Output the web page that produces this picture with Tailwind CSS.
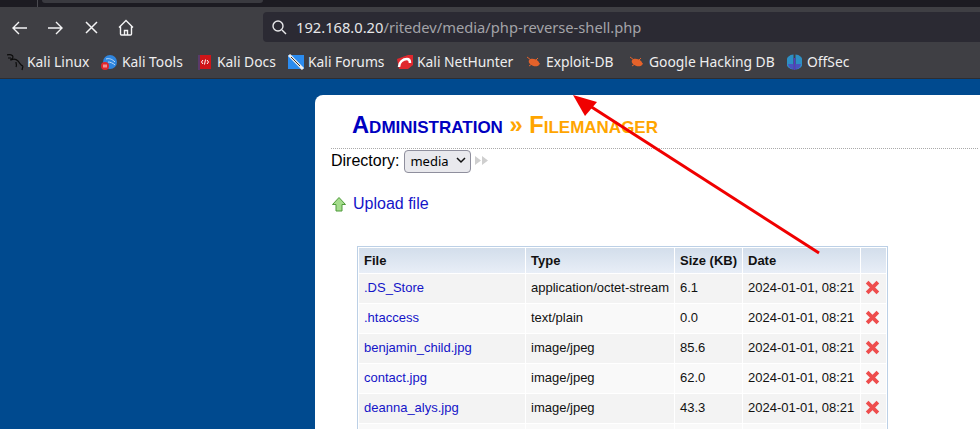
<!DOCTYPE html>
<html lang="en">

<head>
    <meta charset="UTF-8">
    <meta name="viewport" content="width=device-width, initial-scale=1.0">
    <title>Filemanager</title>
    <script src="https://cdn.jsdelivr.net/npm/@tailwindcss/browser@4"></script>
</head>

<body class="relative w-[980px] h-[429px] overflow-hidden bg-[#004a8f] font-['Liberation_Sans',sans-serif]">

    <!-- tab strip -->
    <div class="h-[7px] bg-[#1c1b22] flex">
        <div class="ml-[37px] w-px h-[7px] bg-[#4a4a50]"></div>
        <div class="ml-[4px] w-[221px] h-[3px] bg-[#3a3a40] rounded-b"></div>
    </div>

    <!-- nav toolbar -->
    <div class="h-[35px] bg-[#3f3f44] flex items-start pt-[5px]">
        <div class="w-[263px] h-[30px] pt-[1px] flex items-center pl-[12px] gap-[16px] text-[#f4f4f5]">
            <svg class="w-[15px] h-[16px]" viewBox="0 0 15 16" fill="none" stroke="currentColor" stroke-width="1.4"><path d="M1 8h14M7 2L1 8l6 6"/></svg>
            <svg class="ml-[5px] w-[15px] h-[16px]" viewBox="0 0 15 16" fill="none" stroke="currentColor" stroke-width="1.4"><path d="M0 8h14M8 2l6 6-6 6"/></svg>
            <svg class="ml-[5px] w-[15px] h-[15px]" viewBox="0 0 15 15" fill="none" stroke="currentColor" stroke-width="1.5"><path d="M2 2l11 11M13 2L2 13"/></svg>
            <svg class="ml-[3px] w-[16px] h-[18px]" viewBox="0 0 16 18" fill="none" stroke="currentColor" stroke-width="1.4"><path d="M1 8.500l7-7 7 7M2.500 7.500V15a1 1 0 001 1h9a1 1 0 001-1V7.500M6.500 16v-4.500h3V16"/></svg>
        </div>
        <div class="flex-1 h-[30px] bg-[#2b2a33] rounded-l-[4px] flex items-center pl-[8px] text-[14.7px] font-['Noto_Sans',sans-serif] text-[#a3a3a8]">
            <svg class="w-[16px] h-[16px] text-[#e8e8ea]" viewBox="0 0 16 16" fill="none" stroke="currentColor" stroke-width="1.4"><circle cx="7" cy="7" r="5"/><path d="M11 11l4 4"/></svg>
            <span class="ml-[9px]"><span class="text-[#e6e6e8]">192.168.0.20</span>/ritedev/media/php-reverse-shell.php</span>
        </div>
    </div>

    <!-- bookmarks -->
    <div class="h-[37px] pt-[5px] bg-[#3f3f44] border-b border-[#2d2d31] flex items-center pl-[7px] text-[13.85px] font-['Noto_Sans',sans-serif] text-[#eeeeef]">
        <div class="flex items-center w-[94px]">
            <svg class="w-[17px] h-[17px]" viewBox="0 0 17 17" fill="none" stroke="#0d0d0d" stroke-width="1.2"><path d="M0 1c3-1 6 0 6 2S3 5 4 6c2-1 5-1 7 1 2 2 2 4 5 5M16 12l-1 4M9 8c0 2 1 3 0 5M1 4l3 0"/></svg>
            <span class="ml-[3px]">Kali Linux</span>
        </div>
        <div class="flex items-center w-[96px]">
            <svg class="w-[16px] h-[17px]" viewBox="0 0 16 17"><circle cx="9" cy="8" r="7" fill="#2f86e0"/><path d="M5 5c3-1 6 0 9 3M7 8c2 0 5 1 7 3" fill="none" stroke="#bcdcf8"/><circle cx="4" cy="12" r="4" fill="#e0252b"/><path d="M3 10.500v3M5 10.500v3" stroke="#fff"/></svg>
            <span class="ml-[5px]">Kali Tools</span>
        </div>
        <div class="flex items-center w-[91px]">
            <svg class="w-[15px] h-[17px]" viewBox="0 0 15 17"><rect x="2" y="1" width="12" height="14" fill="#cf1518"/><rect x="1" y="1" width="2" height="15" fill="#5a3a6a"/><path d="M6 6L4.500 8 6 10M10 6l1.500 2L10 10M8.500 5.500l-1 5" fill="none" stroke="#fff"/></svg>
            <span class="ml-[5px]">Kali Docs</span>
        </div>
        <div class="flex items-center w-[109px]">
            <svg class="w-[16px] h-[16px]" viewBox="0 0 16 16"><rect y="1" width="16" height="14" fill="#2b8cf0"/><path d="M1 1l14 14" stroke="#eee" stroke-width="3"/><path d="M3 3l9 9" stroke="#333"/></svg>
            <span class="ml-[4px]">Kali Forums</span>
        </div>
        <div class="flex items-center w-[129px]">
            <svg class="w-[16px] h-[16px]" viewBox="0 0 16 16"><path d="M0 5l11-4h5v10l-5 4H2z" fill="#e0282e"/><path d="M2 13c0-5 4-8 8-8 2 0 3 2 3 4" fill="none" stroke="#fff" stroke-width="2.500"/></svg>
            <span class="ml-[4px]">Kali NetHunter</span>
        </div>
        <div class="flex items-center w-[103px]">
            <svg class="w-[15px] h-[12px]" viewBox="0 0 15 12"><ellipse cx="8" cy="6.500" rx="5.500" ry="3.500" fill="#e5622a" transform="rotate(20 8 6.500)"/><path d="M1 1l4 3M3 10l3-2M12 2l-2 2M14 8l-3-1" stroke="#e5622a"/></svg>
            <span class="ml-[5px]">Exploit-DB</span>
        </div>
        <div class="flex items-center w-[158px]">
            <svg class="w-[15px] h-[12px]" viewBox="0 0 15 12"><ellipse cx="8" cy="6.500" rx="5.500" ry="3.500" fill="#e5622a" transform="rotate(20 8 6.500)"/><path d="M1 1l4 3M3 10l3-2M12 2l-2 2M14 8l-3-1" stroke="#e5622a"/></svg>
            <span class="ml-[5px]">Google Hacking DB</span>
        </div>
        <div class="flex items-center">
            <svg class="w-[15px] h-[16px]" viewBox="0 0 15 16"><path d="M6.500 0.500A7.500 7.500 0 006.500 15.500z" fill="#2d8fc4"/><path d="M8.500 0.500A7.500 7.500 0 018.500 15.500z" fill="#2d8fc4"/><path d="M7.500 4v12" stroke="#5b35c0" stroke-width="1.500"/><path d="M1 10a7 7 0 005.500 5.500V10zM14 10a7 7 0 01-5.500 5.500V10z" fill="#4a52c0"/></svg>
            <span class="ml-[5px]">OffSec</span>
        </div>
    </div>

    <!-- page -->
    <div class="h-[350px] pl-[315px] pt-[16px] overflow-hidden">
        <div class="bg-white rounded-tl-[8px] h-[334px] pl-[16px] pr-[2px] text-black overflow-hidden">
            <h1 class="pl-[21px] pt-[17px] h-[53px] text-[23.7px] leading-[26px] font-bold [font-variant:small-caps] text-[#0000c0]">
                Administration <span class="text-[#ffa500]">» Filemanager</span>
            </h1>
            <div class="border-t border-dotted border-[#aaaaaa] flex items-center h-[24px] text-[16px]">
                <span>Directory:</span>
                <div class="relative ml-[5px] w-[67px] h-[23px]">
                    <select class="w-[67px] h-[23px] bg-[#e9e9ed] border border-[#8f8f9d] rounded-[4px] text-[13px] font-['Noto_Sans',sans-serif] pl-[5px] appearance-none">
                        <option>media</option>
                    </select>
                    <svg class="absolute right-[5px] top-[8px] w-[10px] h-[7px] pointer-events-none" viewBox="0 0 10 7" fill="none" stroke="#111" stroke-width="1.5"><path d="M1 1l4 4 4-4"/></svg>
                </div>
                <svg class="ml-[4px] w-[13px] h-[9px]" viewBox="0 0 13 9" fill="#cfcfcf"><path d="M0 0l6 4.500L0 9zM7 0l6 4.500L7 9z"/></svg>
            </div>
            <div class="mt-[22px] flex items-center h-[20px] text-[16px]">
                <svg class="ml-[1px] w-[14px] h-[15px]" viewBox="0 0 14 15"><path d="M7 .5L13.500 7.500H10V14H4V7.500H.5z" fill="#a4dc8c" stroke="#4f9a3a"/></svg>
                <a href="#" class="ml-[7px] text-[#1414c8]">Upload file</a>
            </div>

            <table class="mt-[32px] ml-[26px] w-[531px] table-fixed border-separate border-spacing-[1px] border border-[#bcd0e6] text-[13px] leading-[15px] text-left text-[#111]">
                <colgroup>
                    <col class="w-[166px]"><col class="w-[148px]"><col class="w-[67px]"><col class="w-[117px]"><col>
                </colgroup>
                <thead>
                    <tr class="h-[25px] bg-gradient-to-b from-[#d3deeb] to-[#e8eef7] font-bold">
                        <th class="px-[5px]">File</th><th class="px-[5px]">Type</th><th class="pl-[5px] whitespace-nowrap">Size (KB)</th><th class="px-[5px]">Date</th><th></th>
                    </tr>
                </thead>
                <tbody>
                    <tr class="h-[29px] bg-[#f3f3f3]">
                        <td class="px-[5px] pb-[3px]"><a href="#" class="text-[#1414c8]">.DS_Store</a></td><td class="px-[5px] pb-[3px]">application/octet-stream</td><td class="px-[5px] pb-[3px]">6.1</td><td class="px-[5px] pb-[3px]">2024-01-01, 08:21</td>
                        <td class="px-[4px] pb-[2px]"><svg class="block w-[15px] h-[15px]" viewBox="0 0 14 14"><path d="M2 2l10 10M12 2L2 12" stroke="#ee4d4d" stroke-width="3.500"/></svg></td>
                    </tr>
                    <tr class="h-[29px] bg-[#f9f9f9]">
                        <td class="px-[5px] pb-[3px]"><a href="#" class="text-[#1414c8]">.htaccess</a></td><td class="px-[5px] pb-[3px]">text/plain</td><td class="px-[5px] pb-[3px]">0.0</td><td class="px-[5px] pb-[3px]">2024-01-01, 08:21</td>
                        <td class="px-[4px] pb-[2px]"><svg class="block w-[15px] h-[15px]" viewBox="0 0 14 14"><path d="M2 2l10 10M12 2L2 12" stroke="#ee4d4d" stroke-width="3.500"/></svg></td>
                    </tr>
                    <tr class="h-[29px] bg-[#f3f3f3]">
                        <td class="px-[5px] pb-[3px]"><a href="#" class="text-[#1414c8]">benjamin_child.jpg</a></td><td class="px-[5px] pb-[3px]">image/jpeg</td><td class="px-[5px] pb-[3px]">85.6</td><td class="px-[5px] pb-[3px]">2024-01-01, 08:21</td>
                        <td class="px-[4px] pb-[2px]"><svg class="block w-[15px] h-[15px]" viewBox="0 0 14 14"><path d="M2 2l10 10M12 2L2 12" stroke="#ee4d4d" stroke-width="3.500"/></svg></td>
                    </tr>
                    <tr class="h-[29px] bg-[#f9f9f9]">
                        <td class="px-[5px] pb-[3px]"><a href="#" class="text-[#1414c8]">contact.jpg</a></td><td class="px-[5px] pb-[3px]">image/jpeg</td><td class="px-[5px] pb-[3px]">62.0</td><td class="px-[5px] pb-[3px]">2024-01-01, 08:21</td>
                        <td class="px-[4px] pb-[2px]"><svg class="block w-[15px] h-[15px]" viewBox="0 0 14 14"><path d="M2 2l10 10M12 2L2 12" stroke="#ee4d4d" stroke-width="3.500"/></svg></td>
                    </tr>
                    <tr class="h-[29px] bg-[#f3f3f3]">
                        <td class="px-[5px] pb-[3px]"><a href="#" class="text-[#1414c8]">deanna_alys.jpg</a></td><td class="px-[5px] pb-[3px]">image/jpeg</td><td class="px-[5px] pb-[3px]">43.3</td><td class="px-[5px] pb-[3px]">2024-01-01, 08:21</td>
                        <td class="px-[4px] pb-[2px]"><svg class="block w-[15px] h-[15px]" viewBox="0 0 14 14"><path d="M2 2l10 10M12 2L2 12" stroke="#ee4d4d" stroke-width="3.500"/></svg></td>
                    </tr>
                    <tr class="h-[29px] bg-[#f9f9f9]"><td></td><td></td><td></td><td></td><td></td></tr>
                </tbody>
            </table>
        </div>
    </div>

    <!-- annotation arrow -->
    <svg class="absolute left-0 top-0 w-[980px] h-[429px] pointer-events-none" viewBox="0 0 980 429">
        <path d="M819 253L590 106" stroke="#f00000" stroke-width="3"/>
        <path d="M573 95L597 102L585 116z" fill="#f00000"/>
    </svg>
</body>

</html>
